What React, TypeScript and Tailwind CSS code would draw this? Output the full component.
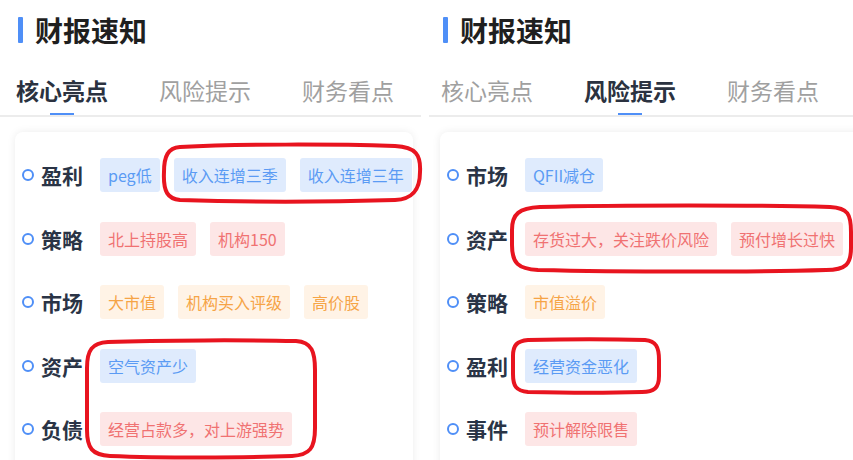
import React from "react";

type Tone = "blue" | "red" | "orange";
type Row = { label: string; tags: { text: string; tone: Tone }[] };

const toneCls: Record<Tone, string> = {
  blue: "bg-[#dfebfd] text-[#5b9bf4]",
  red: "bg-[#fde6e6] text-[#f07272]",
  orange: "bg-[#fff3e6] text-[#f6a446]",
};

const leftRows: Row[] = [
  { label: "盈利", tags: [{ text: "peg低", tone: "blue" }, { text: "收入连增三季", tone: "blue" }, { text: "收入连增三年", tone: "blue" }] },
  { label: "策略", tags: [{ text: "北上持股高", tone: "red" }, { text: "机构150", tone: "red" }] },
  { label: "市场", tags: [{ text: "大市值", tone: "orange" }, { text: "机构买入评级", tone: "orange" }, { text: "高价股", tone: "orange" }] },
  { label: "资产", tags: [{ text: "空气资产少", tone: "blue" }] },
  { label: "负债", tags: [{ text: "经营占款多，对上游强势", tone: "red" }] },
];

const rightRows: Row[] = [
  { label: "市场", tags: [{ text: "QFII减仓", tone: "blue" }] },
  { label: "资产", tags: [{ text: "存货过大，关注跌价风险", tone: "red" }, { text: "预付增长过快", tone: "red" }] },
  { label: "策略", tags: [{ text: "市值溢价", tone: "orange" }] },
  { label: "盈利", tags: [{ text: "经营资金恶化", tone: "blue" }] },
  { label: "事件", tags: [{ text: "预计解除限售", tone: "red" }] },
];

const tabs = ["核心亮点", "风险提示", "财务看点"];

function Panel({ rows, active, right }: { rows: Row[]; active: number; right: boolean }) {
  return (
    <div className="flex flex-col w-[421px] shrink-0">
      <div className="mt-[16px] h-[28px] flex items-center">
        <div className="ml-[18px] w-[5px] h-[26px] bg-[#4f8ff7] rounded-[1px]" />
        <div className="ml-[12px] text-[28px] leading-[28px] font-bold text-[#1f1f1f]">财报速知</div>
      </div>
      <div className="mt-[27px] h-[44px] flex pl-[16px] gap-[51px]">
        {tabs.map((t, i) => (
          <div key={t} className="w-[92px] flex flex-col items-center">
            <div
              className={
                "h-[42px] text-[23px] leading-[38px] whitespace-nowrap " +
                (i === active ? "font-bold text-[#2b3240]" : "text-[#a0a0a0]")
              }
            >
              {t}
            </div>
            <div className={"w-[24px] h-[2px] " + (i === active ? "bg-[#4f8ff7]" : "")} />
          </div>
        ))}
      </div>
      <div className={"h-[2px] bg-[#ececec] " + (right ? "ml-[4px] w-[428px]" : "w-[421px]")} />
      <div
        className={
          "mt-[15px] ml-[15px] rounded-lg bg-white shadow-[0_0_8px_rgba(0,0,0,0.08)] pt-[26px] pl-[7px] flex flex-col gap-y-[29.5px] h-[400px] " +
          (right ? "mr-[-20px]" : "mr-[8px]")
        }
      >
        {rows.map((r) => (
          <div key={r.label} className="flex items-center h-[34px]">
            <div className="w-[12px] h-[12px] rounded-full border-2 border-[#4f8ff7] shrink-0" />
            <div className="ml-[7px] w-[59px] text-[21px] leading-[34px] font-bold text-[#2a3446] whitespace-nowrap">
              {r.label}
            </div>
            <div className="flex gap-[14px]">
              {r.tags.map((t) => (
                <div
                  key={t.text}
                  className={"h-[34px] px-[8px] rounded-[3px] text-[16px] leading-[34px] whitespace-nowrap " + toneCls[t.tone]}
                >
                  {t.text}
                </div>
              ))}
            </div>
          </div>
        ))}
      </div>
    </div>
  );
}

export default function App() {
  return (
    <div
      className="relative w-[853px] h-[460px] overflow-hidden bg-white"
      style={{ fontFamily: '"Noto Sans CJK SC", "Noto Sans", sans-serif' }}
    >
      <div className="flex gap-[4px]">
        <Panel rows={leftRows} active={0} right={false} />
        <Panel rows={rightRows} active={1} right={true} />
      </div>
      <svg className="absolute left-0 top-0 pointer-events-none z-20" width="853" height="460" viewBox="0 0 853 460" fill="none">
        <g stroke="#e8141f" strokeWidth="4" strokeLinecap="round" strokeLinejoin="round">
          <path d="M180 147 C 240 144, 330 144, 395 146 C 416 147, 421 155, 420 172 C 420 188, 414 199, 395 200 C 330 202, 240 202, 180 200 C 168 199, 163 192, 164 172 C 164 156, 168 148, 180 147 Z" />
          <path d="M108 342 C 160 340, 250 340, 296 341 C 312 342, 315 352, 315 370 L 315 428 C 315 448, 310 455, 292 456 C 240 458, 160 458, 110 456 C 92 455, 87 448, 87 430 L 87 368 C 87 350, 92 343, 108 342 Z" />
          <path d="M540 207 C 620 205, 760 205, 830 207 C 848 208, 851 214, 851 232 L 851 248 C 851 264, 846 270, 826 270 C 760 272, 620 272, 538 270 C 518 269, 512 263, 512 245 L 512 230 C 512 214, 519 208, 540 207 Z" />
          <path d="M528 340 C 570 339, 610 339, 645 340 C 656 341, 659 347, 659 360 L 659 376 C 659 388, 654 392, 642 392 C 610 393, 570 393, 528 392 C 516 391, 513 386, 513 374 L 513 356 C 513 345, 517 341, 528 340 Z" />
        </g>
      </svg>
    </div>
  );
}
